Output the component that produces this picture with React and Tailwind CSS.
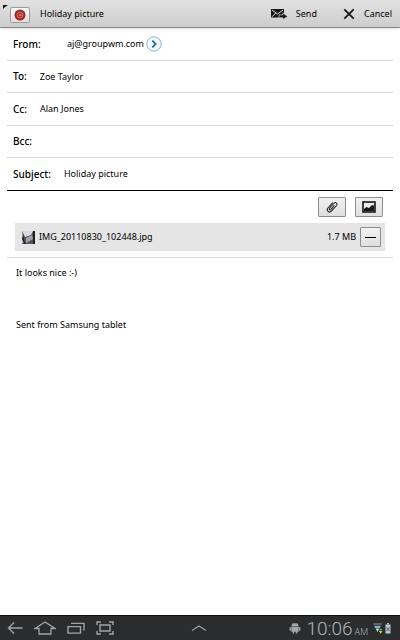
import React, { useState } from 'react';

const MailIcon = () => (
  <svg width="30" height="20" viewBox="0 0 30 20" aria-hidden="true">
    <defs>
      <linearGradient id="envelope" x1="0" y1="0" x2="0" y2="1">
        <stop offset="0" stopColor="#ffffff" />
        <stop offset="1" stopColor="#dedede" />
      </linearGradient>
    </defs>
    <path d="M3 1h5L5 3 3 5z" fill="#111" />
    <rect x="10.5" y="3.5" width="19" height="15" rx="1" fill="url(#envelope)" stroke="#9a9a9a" />
    <path d="M11 4l7 6M29 4l-7 6M11 18l6-5M29 18l-6-5" stroke="#dcdcdc" fill="none" />
    <circle cx="20" cy="11" r="5.5" fill="#9f2a25" />
    <circle cx="20" cy="11" r="3" fill="#a9352e" stroke="#cf8076" strokeWidth=".8" />
    <path d="M21.3 9.600v2c0 1 1.500.8 1.600-.4" stroke="#cf8076" strokeWidth=".6" fill="none" />
    <circle cx="20" cy="11" r="1" fill="#cf8076" />
  </svg>
);

const SendIcon = () => (
  <svg width="17" height="12" viewBox="0 0 17 12" aria-hidden="true">
    <path d="M0 1h13v8.500H0z" fill="#161616" />
    <path d="M1 2l5.500 4L12 2M1 8.800l3.500-3.600" stroke="#dcdcdc" strokeWidth="1" fill="none" />
    <path d="M8 6.800h4V5l4.600 3.400L12 11.600V9.800H8z" fill="#161616" stroke="#d6d6d6" strokeWidth=".7" />
  </svg>
);

const CloseIcon = () => (
  <svg width="12" height="12" viewBox="0 0 12 12" aria-hidden="true">
    <path d="M1.300 1.300l9.400 9.400M10.700 1.300l-9.400 9.400" stroke="#161616" strokeWidth="1.800" fill="none" />
  </svg>
);

const ExpandIcon = () => (
  <svg width="16" height="16" viewBox="0 0 16 16" aria-hidden="true">
    <circle cx="8" cy="8" r="7.200" fill="#f4f9fd" stroke="#86b5da" strokeWidth="1" />
    <path d="M6.300 4.600L9.700 8l-3.400 3.400" stroke="#2468a0" strokeWidth="1.800" fill="none" />
  </svg>
);

const ClipIcon = () => (
  <svg width="14" height="14" viewBox="0 0 14 14" aria-hidden="true">
    <g transform="rotate(42 7 7)" fill="none" stroke="#222" strokeWidth="1" strokeLinecap="round">
      <path d="M4.600 3.500v7a2.400 2.400 0 0 0 4.800 0V2.800a1.700 1.700 0 0 0-3.400 0V9.800a.9.9 0 0 0 1.800 0V4.500" />
    </g>
  </svg>
);

const PictureIcon = () => (
  <svg width="14" height="12" viewBox="0 0 14 12" aria-hidden="true">
    <rect x="1" y="1" width="12" height="10" fill="#ececec" stroke="#161616" strokeWidth="1.600" />
    <path d="M2 10V8l2.500-2 2.500 1 3-3 2 .5V10z" fill="#161616" />
  </svg>
);

const Thumbnail = () => (
  <svg width="13" height="13" viewBox="0 0 13 13" aria-hidden="true">
    <rect width="13" height="13" fill="#55555e" />
    <path d="M0 0h11L9 4 3 6z" fill="#d9d9e2" />
    <path d="M0 1l3 11H0z" fill="#c9c9d0" />
    <path d="M4 7l6-3 1 4-7 4z" fill="#a0a0a6" />
    <path d="M11 0h2v13h-2z" fill="#202026" />
    <path d="M1 3l2 8 1 2H2L0 8z" fill="#25252b" />
  </svg>
);

const BackIcon = () => (
  <svg width="16" height="14" viewBox="0 0 16 14" aria-hidden="true">
    <path d="M15.500 7h-14M7 1.500L1.500 7 7 12.500" stroke="#a3a3a3" strokeWidth="1.400" fill="none" />
  </svg>
);

const HomeIcon = () => (
  <svg width="22" height="14" viewBox="0 0 22 14" aria-hidden="true">
    <path d="M1 7.500L11 1l10 6.500h-4V13H5V7.500z" stroke="#a3a3a3" strokeWidth="1.300" fill="none" />
  </svg>
);

const RecentIcon = () => (
  <svg width="18" height="12" viewBox="0 0 18 12" aria-hidden="true">
    <path d="M1 4.600h12.500v6.500H1zM4 1.400h13v7" stroke="#a3a3a3" strokeWidth="1.400" fill="none" />
  </svg>
);

const CaptureIcon = () => (
  <svg width="18" height="14" viewBox="0 0 18 14" aria-hidden="true">
    <path
      d="M1 4V1h4M13 1h4v3M17 10v3h-4M5 13H1v-3M4 4h10v6H4z"
      stroke="#a3a3a3"
      strokeWidth="1.400"
      fill="none"
    />
  </svg>
);

const DrawerIcon = () => (
  <svg width="16" height="8" viewBox="0 0 16 8" aria-hidden="true">
    <path d="M1 6.500L8 2l7 4.500" stroke="#a3a3a3" strokeWidth="1.200" fill="none" />
  </svg>
);

const AndroidIcon = () => (
  <svg width="12" height="12" viewBox="0 0 12 12" fill="#a6a6a6" aria-hidden="true">
    <path d="M2.300 4.600a3.700 3.400 0 0 1 7.400 0z" />
    <path d="M3.300.8l1 1.500M8.700.8l-1 1.500" stroke="#a6a6a6" strokeWidth=".6" />
    <path d="M2.300 5h7.400V9.800H8.300v1.600H6.800V9.800H5.200v1.600H3.700V9.800H2.300z" />
    <rect x=".6" y="5" width="1.300" height="3.800" rx=".6" />
    <rect x="10.100" y="5" width="1.300" height="3.800" rx=".6" />
  </svg>
);

const WifiIcon = () => (
  <svg width="10" height="12" viewBox="0 0 10 12" aria-hidden="true">
    <path d="M0 1h9L8 3.500H1z" fill="#5f6366" />
    <path d="M1.300 4h6.400L6.800 6H2.200z" fill="#79b9cf" />
    <path d="M2.500 6.400h4L4.500 10z" fill="#a9e1f2" />
    <path d="M6 8.200h3.400L7.700 6.400z" fill="#6fc05a" />
    <path d="M6 9h3.400L7.700 11.700z" fill="#f1d534" />
  </svg>
);

const BatteryIcon = () => (
  <svg width="6" height="11" viewBox="0 0 6 11" aria-hidden="true">
    <rect x="2" y="0" width="2" height="1.500" fill="#b9c4c9" />
    <rect x=".5" y="1.500" width="5" height="9" fill="#a9cfdd" />
    <path d="M1.500 4.500l3 3.500M4.500 4.500l-3 3.500" stroke="#b0413c" strokeWidth="1.100" />
  </svg>
);

const Field = ({ id, label, className, value, onChange }) => (
  <div className={`mx-[7px] flex items-center border-b px-[6px] ${className}`}>
    <label htmlFor={id} className="shrink-0 text-[10px] font-medium">
      {label}
    </label>
    <input
      id={id}
      type="text"
      value={value}
      onChange={onChange}
      className="min-w-0 flex-1 bg-transparent text-[9px] outline-none"
    />
  </div>
);

const toolButton =
  'flex items-center justify-center rounded-[1px] border border-[#8e8e8e] bg-linear-to-b from-[#f1f1f1] to-[#dfdfdf]';

const App = () => {
  const [mail, setMail] = useState({
    to: 'Zoe Taylor',
    cc: 'Alan Jones',
    bcc: '',
    subject: 'Holiday picture',
    body: 'It looks nice :-)\n\n\n\nSent from Samsung tablet',
  });

  const update = (key) => (e) => setMail({ ...mail, [key]: e.target.value });

  return (
    <div className="flex min-h-screen flex-col bg-white font-['Noto_Sans',sans-serif] text-black">
      <header className="flex h-7 items-center border-b border-[#8a8a8a] bg-linear-to-b from-[#e2e2e2] to-[#cdcdcd] pr-2 text-[9px] shadow-sm">
        <MailIcon />
        <h1 className="ml-[10px] flex-1">Holiday picture</h1>
        <button type="button" className="flex items-center gap-2">
          <SendIcon />
          Send
        </button>
        <button type="button" className="ml-[26px] flex items-center gap-[9px]">
          <CloseIcon />
          Cancel
        </button>
      </header>

      <main className="flex flex-1 flex-col">
        <div className="mx-[7px] flex h-[33px] items-center border-b border-[#dcdcdc] px-[6px]">
          <span className="w-[54px] text-[10px] font-medium">From:</span>
          <span className="text-[9px]">aj@groupwm.com</span>
          <button type="button" aria-label="Choose account" className="ml-[2px]">
            <ExpandIcon />
          </button>
        </div>
        <Field id="to" label="To:" value={mail.to} onChange={update('to')} className="h-8 gap-[13px] border-[#dcdcdc]" />
        <Field id="cc" label="Cc:" value={mail.cc} onChange={update('cc')} className="h-[33px] gap-[13px] border-[#dcdcdc]" />
        <Field id="bcc" label="Bcc:" value={mail.bcc} onChange={update('bcc')} className="h-8 gap-[13px] border-[#dcdcdc]" />
        <Field
          id="subject"
          label="Subject:"
          value={mail.subject}
          onChange={update('subject')}
          className="h-[33px] gap-[13px] border-black"
        />

        <section className="mx-[7px] border-b border-[#dcdcdc] px-2 py-[6px]">
          <div className="flex justify-end gap-[9px] pr-[2px]">
            <button type="button" aria-label="Attach file" className={`h-5 w-7 ${toolButton}`}>
              <ClipIcon />
            </button>
            <button type="button" aria-label="Insert picture" className={`h-5 w-7 ${toolButton}`}>
              <PictureIcon />
            </button>
          </div>
          <div className="mt-[6px] flex h-7 items-center bg-[#e5e5e5] pr-1 pl-[7px] text-[9px]">
            <Thumbnail />
            <span className="ml-1 flex-1">IMG_20110830_102448.jpg</span>
            <span>1.7 MB</span>
            <button type="button" aria-label="Remove attachment" className={`ml-1 h-5 w-[21px] ${toolButton}`}>
              <span className="h-px w-[11px] bg-black" />
            </button>
          </div>
        </section>

        <textarea
          aria-label="Message"
          value={mail.body}
          onChange={update('body')}
          className="w-full flex-1 resize-none px-4 pt-2 text-[9px] leading-[13px] outline-none"
        />
      </main>

      <footer className="flex h-[25px] items-center border-t border-[#111] bg-[#2b2c2e] px-[7px]">
        <nav className="flex flex-1 items-center gap-[11px]">
          <button type="button" aria-label="Back">
            <BackIcon />
          </button>
          <button type="button" aria-label="Home">
            <HomeIcon />
          </button>
          <button type="button" aria-label="Recent apps">
            <RecentIcon />
          </button>
          <button type="button" aria-label="Screenshot">
            <CaptureIcon />
          </button>
        </nav>
        <button type="button" aria-label="Mini apps">
          <DrawerIcon />
        </button>
        <div className="flex flex-1 items-center justify-end gap-[5px] pr-[2px]">
          <AndroidIcon />
          <time className="flex items-baseline gap-[2px] font-['Roboto',sans-serif] text-[19px] leading-none font-light text-[#b4b4b4]">
            10:06
            <span className="text-[9px]">AM</span>
          </time>
          <div className="flex items-center gap-[2px]">
            <WifiIcon />
            <BatteryIcon />
          </div>
        </div>
      </footer>
    </div>
  );
};

export default App;
